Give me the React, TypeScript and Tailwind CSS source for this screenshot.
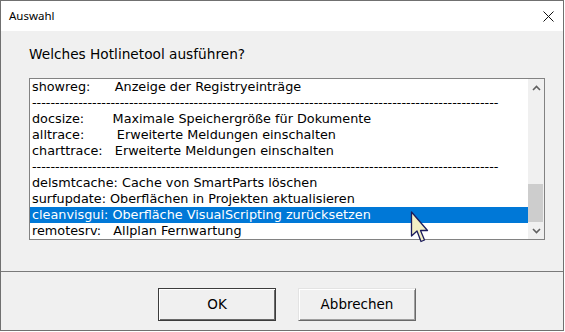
import React from "react";

type Row = { text: string; selected?: boolean };

const DASHES = "-".repeat(101);

const ROWS: Row[] = [
  { text: "showreg:      Anzeige der Registryeinträge" },
  { text: DASHES },
  { text: "docsize:       Maximale Speichergröße für Dokumente" },
  { text: "alltrace:        Erweiterte Meldungen einschalten" },
  { text: "charttrace:   Erweiterte Meldungen einschalten" },
  { text: DASHES },
  { text: "delsmtcache: Cache von SmartParts löschen" },
  { text: "surfupdate: Oberflächen in Projekten aktualisieren" },
  { text: "cleanvisgui: Oberfläche VisualScripting zurücksetzen", selected: true },
  { text: "remotesrv:   Allplan Fernwartung" },
];

const Chevron = ({ up }: { up?: boolean }) => (
  <svg width="9" height="6" viewBox="0 0 9 6" className="block">
    <polyline
      points={up ? "1,5 4.5,1.5 8,5" : "1,1 4.5,4.5 8,1"}
      fill="none"
      stroke="#606060"
      strokeWidth="1.6"
    />
  </svg>
);

const App: React.FC = () => {
  return (
    <div className="relative w-[565px] h-[332px] bg-white font-['DejaVu_Sans',Verdana,sans-serif] text-black">
      <div className="w-[564px] h-[331px] border border-[#707070] bg-[#f0f0f0] flex flex-col">
        {/* title bar */}
        <div className="h-[30px] bg-white flex items-center justify-between pl-[8px] pr-[9px]">
          <span className="font-['Noto_Sans',sans-serif] text-[11.5px] leading-none text-black">
            Auswahl
          </span>
          <svg width="11" height="11" viewBox="0 0 11 11" className="block">
            <path d="M0.5 0.5 L10.5 10.5 M10.5 0.5 L0.5 10.5" stroke="#111" strokeWidth="1" />
          </svg>
        </div>

        {/* body */}
        <div className="pl-[28px] pt-[15px]">
          <div className="text-[13.7px] leading-[16px] mb-[16px]">Welches Hotlinetool ausführen?</div>
          <div className="w-[516px] h-[162px] border border-[#828282] bg-white flex">
            <div className="flex-1 flex flex-col">
              {ROWS.map((row, i) => (
                <div
                  key={i}
                  className={
                    "h-[16px] pl-[2px] text-[12.8px] leading-[16px] whitespace-pre overflow-hidden " +
                    (row.selected ? "bg-[#0078d7] text-white" : "text-black")
                  }
                >
                  {row.text}
                </div>
              ))}
            </div>
            {/* scrollbar */}
            <div className="w-[16px] bg-[#f0f0f0] flex flex-col">
              <div className="h-[17px] flex items-center justify-center">
                <Chevron up />
              </div>
              <div className="flex-1 flex flex-col">
                <div className="h-[88px]" />
                <div className="h-[38px] w-[15px] bg-[#cdcdcd]" />
              </div>
              <div className="h-[17px] flex items-center justify-center">
                <Chevron />
              </div>
            </div>
          </div>
        </div>

        <div className="mt-[31px] h-px bg-[#7a7a7a]" />

        {/* buttons */}
        <div className="flex pl-[157px] pt-[16px] gap-[22px]">
          <button className="w-[118px] h-[33px] border border-[#3c3c3c] bg-[#f0f0f0] shadow-[inset_1px_1px_0_#ffffff,inset_-1px_-1px_0_#696969] text-[13.5px] leading-none">
            OK
          </button>
          <button className="w-[118px] h-[33px] border-t border-l border-r border-b border-t-[#e3e3e3] border-l-[#e3e3e3] border-r-[#696969] border-b-[#696969] bg-[#f0f0f0] shadow-[inset_1px_1px_0_#ffffff,inset_-1px_-1px_0_#a0a0a0] text-[13.5px] leading-none">
            Abbrechen
          </button>
        </div>
      </div>

      {/* mouse cursor */}
      <svg
        width="20"
        height="34"
        viewBox="0 0 20 34"
        className="absolute left-[410px] top-[211px]"
      >
        <path
          d="M1.5 1 L1.5 25 L7 20 L11 30.5 L14.5 29 L10.5 19.5 L17.5 19.5 Z"
          fill="#f2eec4"
          stroke="#1c1c5c"
          strokeWidth="1.3"
          strokeLinejoin="round"
        />
      </svg>
    </div>
  );
};

export default App;
